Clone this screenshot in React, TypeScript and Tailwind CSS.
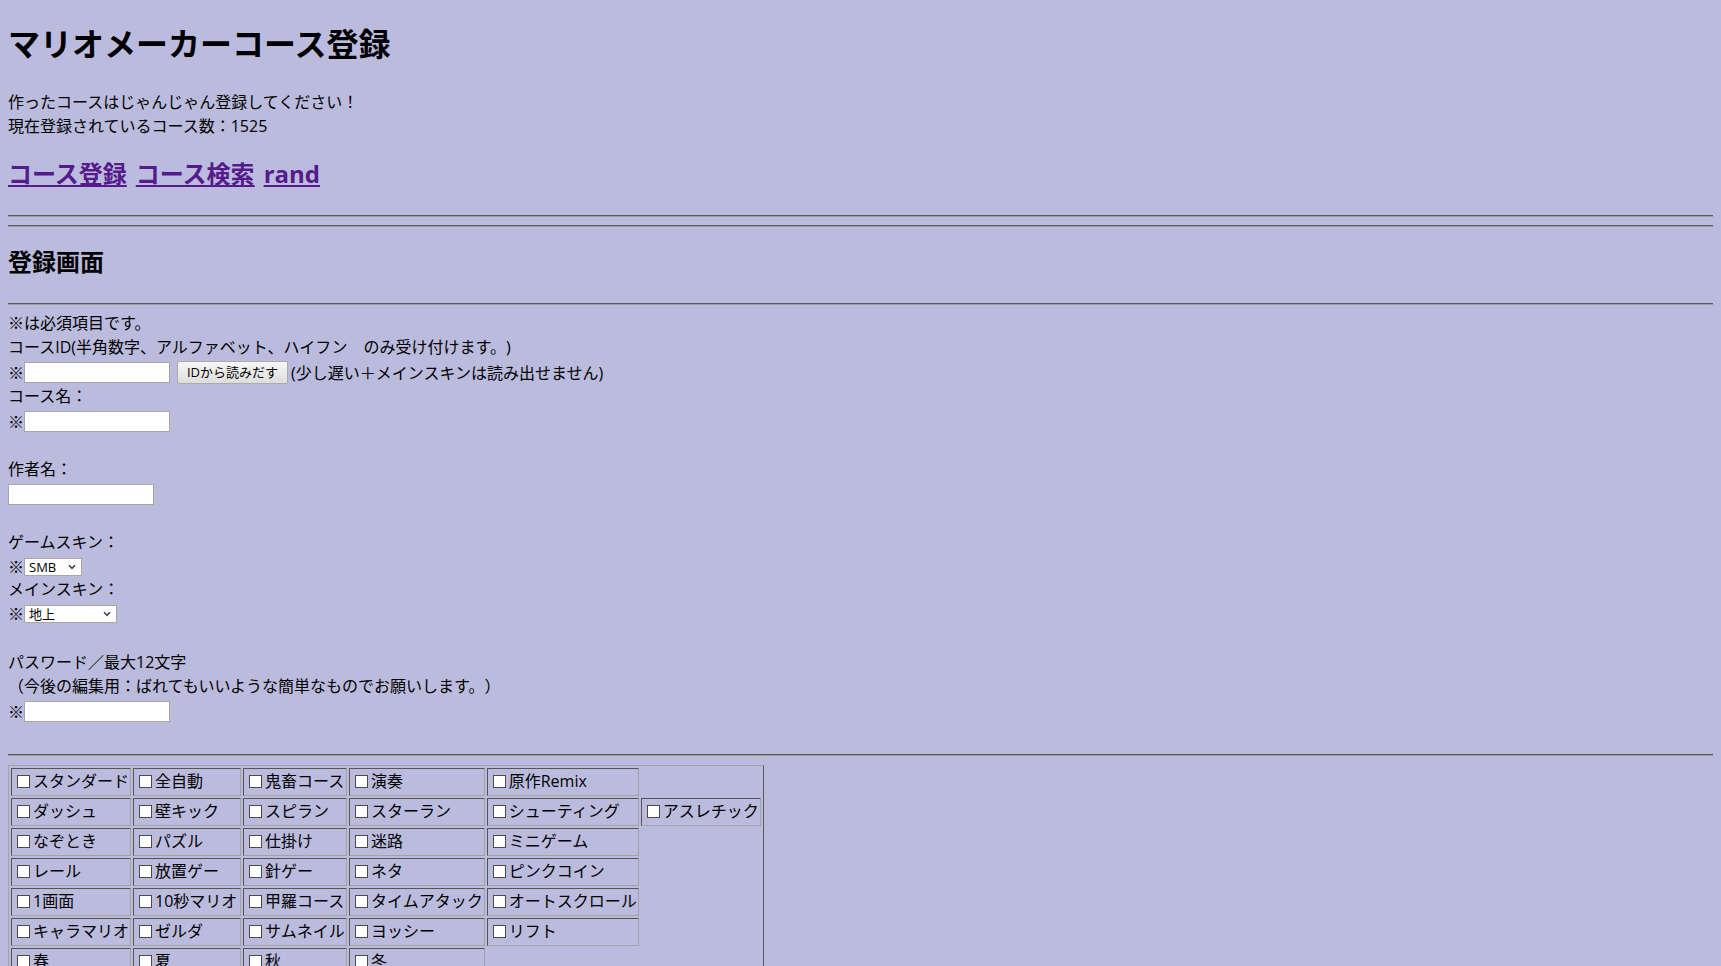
import React from "react";

const rows: string[][] = [
  ["スタンダード", "全自動", "鬼畜コース", "演奏", "原作Remix"],
  ["ダッシュ", "壁キック", "スピラン", "スターラン", "シューティング", "アスレチック"],
  ["なぞとき", "パズル", "仕掛け", "迷路", "ミニゲーム"],
  ["レール", "放置ゲー", "針ゲー", "ネタ", "ピンクコイン"],
  ["1画面", "10秒マリオ", "甲羅コース", "タイムアタック", "オートスクロール"],
  ["キャラマリオ", "ゼルダ", "サムネイル", "ヨッシー", "リフト"],
  ["春", "夏", "秋", "冬"],
];

const colW = ["w-[120px]", "w-[108px]", "w-[104px]", "w-[135px]", "w-[152px]", "w-[120px]"];

function Hr({ className = "" }: { className?: string }) {
  return <div className={"h-[2px] border-t border-b border-t-[#5c5c5c] border-b-[#9c9c9c] " + className} />;
}

function TextInput({ w = "w-[146px]" }: { w?: string }) {
  return <input type="text" className={"h-[21px] bg-white border border-[#a6a6a6] outline-none " + w} />;
}

function Select({ label, w }: { label: string; w: string }) {
  return (
    <span className={"inline-flex h-[18px] items-center justify-between bg-white border border-[#a6a6a6] pl-[4px] pr-[5px] text-[13px] leading-[16px] " + w}>
      <span>{label}</span>
      <svg width="8" height="6" viewBox="0 0 8 6">
        <path d="M1 1.2 L4 4.4 L7 1.2" fill="none" stroke="#444" strokeWidth="1.6" />
      </svg>
    </span>
  );
}

export default function App() {
  return (
    <div className="h-[966px] overflow-hidden bg-[#bbbbdd] text-black font-['Open_Sans','Noto_Sans_CJK_JP',sans-serif] [text-spacing-trim:space-all] px-[8px]">
      <div className="pt-[22px]">
        <h1 className="h-[44px] leading-[44px] text-[32px] font-bold whitespace-nowrap">マリオメーカーコース登録</h1>
        <div className="mt-[24px] text-[16px] leading-[24px]">
          <div>作ったコースはじゃんじゃん登録してください！</div>
          <div>現在登録されているコース数：1525</div>
        </div>
        <div className="mt-[19px] h-[36px] flex items-center gap-[9px] pb-[2px] text-[24px] leading-[32px] font-bold text-[#551a8b]">
          <a href="#" className="underline">コース登録</a>
          <a href="#" className="underline">コース検索</a>
          <a href="#" className="underline">rand</a>
        </div>
        <Hr className="mt-[22px]" />
        <Hr className="mt-[8px]" />
        <h3 className="mt-[22px] h-[28px] leading-[26px] text-[24px] font-bold">登録画面</h3>
        <Hr className="mt-[26px]" />
        <div className="mt-[7px] text-[16px] leading-[22px]">
          <div className="h-[24px]">※は必須項目です。</div>
          <div className="h-[24px] whitespace-nowrap">コースID(半角数字、アルファベット、ハイフン　のみ受け付けます。)</div>
          <div className="h-[25px] flex items-center whitespace-nowrap">
            <span>※</span>
            <TextInput />
            <button className="ml-[7px] h-[23px] w-[111px] border border-[#ababab] rounded-[2px] bg-gradient-to-b from-[#f7f7f7] to-[#dddddd] text-[13px] leading-[21px] text-black">IDから読みだす</button>
            <span className="ml-[3px]">(少し遅い＋メインスキンは読み出せません)</span>
          </div>
          <div className="h-[24px]">コース名：</div>
          <div className="h-[25px] flex items-center">
            <span>※</span>
            <TextInput />
          </div>
          <div className="h-[24px]" />
          <div className="h-[24px]">作者名：</div>
          <div className="h-[25px] flex items-center">
            <TextInput />
          </div>
          <div className="h-[24px]" />
          <div className="h-[24px]">ゲームスキン：</div>
          <div className="h-[23px] flex items-center">
            <span>※</span>
            <Select label="SMB" w="w-[58px]" />
          </div>
          <div className="h-[24px]">メインスキン：</div>
          <div className="h-[23px] flex items-center">
            <span>※</span>
            <Select label="地上" w="w-[93px]" />
          </div>
          <div className="h-[26px]" />
          <div className="h-[24px]">パスワード／最大12文字</div>
          <div className="h-[24px]">（今後の編集用：ばれてもいいような簡単なものでお願いします。）</div>
          <div className="h-[25px] flex items-center">
            <span>※</span>
            <TextInput />
          </div>
        </div>
        <Hr className="mt-[30px]" />
        <table className="mt-[9px] border-separate border-spacing-[2px] border border-t-[#a3a3a3] border-l-[#a3a3a3] border-r-[#5a5a5a] border-b-[#5a5a5a] text-[16px]">
          <tbody>
            {rows.map((r, i) => (
              <tr key={i}>
                {r.map((c, j) => (
                  <td
                    key={j}
                    className={"p-[1px] border border-t-[#555555] border-l-[#555555] border-r-[#a3a3a3] border-b-[#a3a3a3] align-middle " + colW[j]}
                  >
                    <div className="h-[24px] pb-[2px] flex items-center whitespace-nowrap leading-[20px]">
                      <input type="checkbox" className="appearance-none w-[13px] h-[13px] bg-white border border-[#4a4a4a] ml-[4px] mr-[3px] shrink-0" />
                      <span>{c}</span>
                    </div>
                  </td>
                ))}
              </tr>
            ))}
          </tbody>
        </table>
      </div>
    </div>
  );
}
